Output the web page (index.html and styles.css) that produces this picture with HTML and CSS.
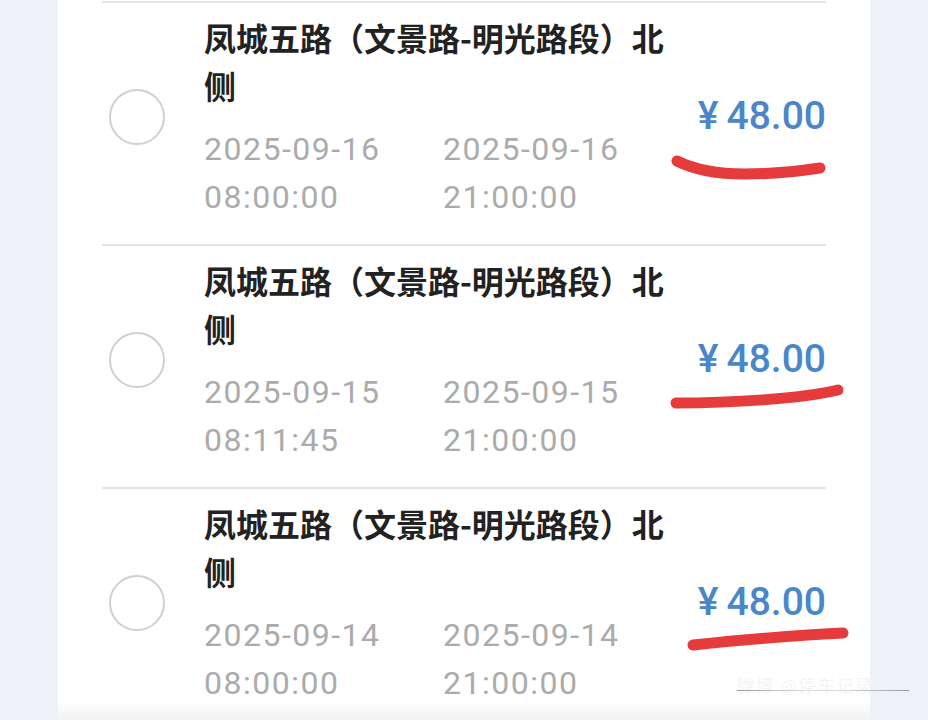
FILE: index.html
```html
<!DOCTYPE html>
<html lang="zh-CN">
<head>
    <meta charset="UTF-8">
    <meta name="viewport" content="width=device-width, initial-scale=1.0">
    <title>停车记录</title>
    <link rel="stylesheet" href="styles.css">
</head>
<body>

<div class="page">
    <div class="card">

        <!-- Record 1 -->
        <div class="record">
            <span class="check"></span>
            <div class="info">
                <div class="title">凤城五路（文景路-明光路段）北侧</div>
                <div class="times">
                    <span>2025-09-16<br>08:00:00</span>
                    <span>2025-09-16<br>21:00:00</span>
                </div>
            </div>
            <div class="price">¥<span class="amount">48.00</span></div>
            <svg class="mark mark-1" width="200" height="40" viewBox="0 0 200 40">
                <path d="M17 11 C35 20 55 24 85 24 S140 21 160 18"/>
            </svg>
        </div>

        <!-- Record 2 -->
        <div class="record">
            <span class="check"></span>
            <div class="info">
                <div class="title">凤城五路（文景路-明光路段）北侧</div>
                <div class="times">
                    <span>2025-09-15<br>08:11:45</span>
                    <span>2025-09-15<br>21:00:00</span>
                </div>
            </div>
            <div class="price">¥<span class="amount">48.00</span></div>
            <svg class="mark mark-2" width="200" height="40" viewBox="0 0 200 40">
                <path d="M16 24 C70 24 140 20 178 11"/>
            </svg>
        </div>

        <!-- Record 3 -->
        <div class="record">
            <span class="check"></span>
            <div class="info">
                <div class="title">凤城五路（文景路-明光路段）北侧</div>
                <div class="times">
                    <span>2025-09-14<br>08:00:00</span>
                    <span>2025-09-14<br>21:00:00</span>
                </div>
            </div>
            <div class="price">¥<span class="amount">48.00</span></div>
            <svg class="mark mark-3" width="200" height="40" viewBox="0 0 200 40">
                <path d="M33 27 C80 22 140 17 183 15"/>
            </svg>
        </div>

    </div>

    <!-- Watermark -->
    <div class="watermark">
        <span class="wm-text">微博 @停车记录</span>
        <span class="wm-line"></span>
    </div>
</div>

</body>
</html>
```

FILE: styles.css
```css
/* Basic styling */
body { margin: 0; background-color: #eef2f8; font-family: Roboto, "Noto Sans CJK SC", sans-serif; }
.page { position: relative; width: 928px; height: 720px; overflow: hidden; display: flex; }

/* Card */
.card {
    margin-left: 58px;
    width: 812px;
    padding: 1px 44px 0;
    box-sizing: border-box;
    background: linear-gradient(to bottom, #ffffff 97.5%, #f1f1f1);
}

/* Record row */
.record {
    position: relative;
    display: flex;
    align-items: center;
    border-top: 2px solid #e4e4e4;
    padding: 10px 0 23px 7px;
}
.check {
    flex-shrink: 0;
    width: 52px;
    height: 52px;
    border: 2px solid #d0d0d0;
    border-radius: 50%;
    margin-right: 39px;
    margin-top: -1px;
}
.info { flex: 0 0 auto; }
.title {
    width: 470px;
    font-family: "Noto Sans CJK SC", sans-serif;
    font-weight: 700;
    font-size: 32px;
    line-height: 48px;
    color: #222222;
}
.times {
    display: grid;
    grid-template-columns: 239px auto;
    margin-top: 16px;
    font-size: 32px;
    line-height: 48px;
    letter-spacing: 1.5px;
    color: #ababab;
}

/* Price */
.price {
    margin-left: auto;
    margin-top: -3px;
    font-family: Roboto, "Noto Sans CJK SC", sans-serif;
    font-weight: 500;
    font-size: 39px;
    color: #4a86c8;
}
.price .amount { margin-left: 8px; }

/* Hand-drawn red marks */
.mark { position: absolute; left: 558px; }
.mark path { fill: none; stroke: #e53b3b; stroke-width: 11; stroke-linecap: round; }
.mark-1 { top: 147px; }
.mark-2 { top: 133px; }
.mark-3 { top: 129px; }

/* Watermark */
.watermark { position: absolute; left: 737px; top: 676px; width: 172px; height: 24px; }
.wm-text { display: block; font-size: 17px; line-height: 20px; color: #f4f4f4; letter-spacing: 2px; }
.wm-line {
    position: absolute;
    left: 0;
    top: 14px;
    width: 172px;
    height: 1px;
    background: linear-gradient(to right, #999, #dcdcdc 40%, #dcdcdc 60%, #999);
}
```
